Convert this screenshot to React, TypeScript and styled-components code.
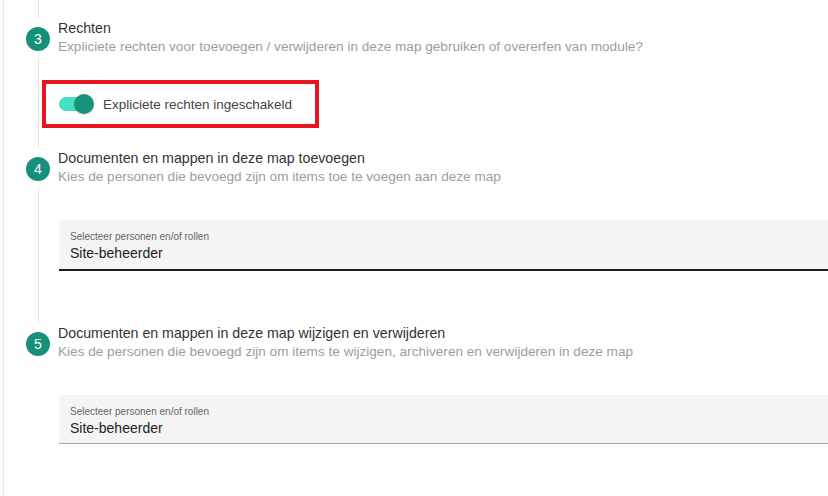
import React from "react";
import styled, { createGlobalStyle } from "styled-components";

const GlobalStyle = createGlobalStyle`
  html, body { margin: 0; padding: 0; background: #ffffff; }
  body { font-family: "Liberation Sans", Arial, sans-serif; color: #333; }
  * { box-sizing: border-box; }
`;

const Page = styled.div`
  margin-left: 3px;
  border-left: 1px solid #e6e6e6;
  min-height: 496px;
  padding-left: 22px;
  overflow: hidden;
`;

const Stepper = styled.div`
  display: flex;
  flex-direction: column;
`;

const Row = styled.div`
  display: grid;
  grid-template-columns: 24px 1fr;
  column-gap: 8px;
`;

const Rail = styled.div`
  display: flex;
  flex-direction: column;
  align-items: center;
`;

const Line = styled.div<{ $h?: number }>`
  width: 1px;
  background: #dedede;
  ${(p) => (p.$h ? `height: ${p.$h}px;` : "flex: 1; margin-top: 8px;")}
`;

const Circle = styled.div`
  margin-top: 9px;
  width: 24px;
  height: 24px;
  border-radius: 50%;
  background: #16907a;
  color: #fff;
  font-size: 14px;
  display: flex;
  align-items: center;
  justify-content: center;
  flex: none;
`;

const Content = styled.div<{ $pb: number }>`
  padding-bottom: ${(p) => p.$pb}px;
  min-width: 0;
`;

const Title = styled.div`
  font-size: 14.2px;
  line-height: 20px;
  color: #333;
  white-space: nowrap;
`;

const Subtitle = styled.div`
  font-size: 13.6px;
  line-height: 18px;
  color: #9d9d9d;
  white-space: nowrap;
`;

const Highlight = styled.div`
  margin-top: 24px;
  margin-left: -16px;
  width: 277px;
  height: 48px;
  border: 4px solid #e6141e;
  padding-left: 13px;
  display: flex;
  align-items: center;
  gap: 9px;
`;

const Toggle = styled.div`
  position: relative;
  width: 35px;
  height: 20px;
  flex: none;
`;

const Track = styled.div`
  position: absolute;
  left: 0;
  top: 3px;
  width: 31px;
  height: 14px;
  border-radius: 7px;
  background: #42e0c6;
`;

const Knob = styled.div`
  position: absolute;
  right: 0;
  top: 0;
  width: 20px;
  height: 20px;
  border-radius: 50%;
  background: #16917a;
  box-shadow: 0 1px 2px rgba(0, 0, 0, 0.15);
`;

const ToggleLabel = styled.span`
  font-size: 13.5px;
  color: #444;
  white-space: nowrap;
`;

const Field = styled.div<{ $focused?: boolean }>`
  margin-top: 34px;
  margin-left: 1px;
  margin-right: -40px;
  background: #f4f4f4;
  border-radius: 4px 4px 0 0;
  padding: 10px 11px 0;
  height: ${(p) => (p.$focused ? 51 : 49)}px;
  border-bottom: ${(p) => (p.$focused ? "2px solid #1c1c1c" : "1px solid #a8a8a8")};
`;

const FieldLabel = styled.div`
  font-size: 10px;
  line-height: 13px;
  color: #666;
  white-space: nowrap;
`;

const FieldValue = styled.div`
  margin-top: 1px;
  font-size: 14px;
  line-height: 18px;
  color: #222;
  white-space: nowrap;
`;

type StepProps = {
  n: number;
  title: string;
  subtitle: string;
  last?: boolean;
  pb: number;
  children?: React.ReactNode;
};

function Step({ n, title, subtitle, last, pb, children }: StepProps) {
  return (
    <Row>
      <Rail>
        <Circle>{n}</Circle>
        {!last && <Line />}
      </Rail>
      <Content $pb={pb}>
        <Title>{title}</Title>
        <Subtitle>{subtitle}</Subtitle>
        {children}
      </Content>
    </Row>
  );
}

export default function App() {
  return (
    <>
      <GlobalStyle />
      <Page>
        <Stepper>
          <Row>
            <Rail>
              <Line $h={18} />
            </Rail>
            <div />
          </Row>
          <Step
            n={3}
            title="Rechten"
            subtitle="Expliciete rechten voor toevoegen / verwijderen in deze map gebruiken of overerfen van module?"
            pb={20}
          >
            <Highlight>
              <Toggle>
                <Track />
                <Knob />
              </Toggle>
              <ToggleLabel>Expliciete rechten ingeschakeld</ToggleLabel>
            </Highlight>
          </Step>
          <Step
            n={4}
            title="Documenten en mappen in deze map toevoegen"
            subtitle="Kies de personen die bevoegd zijn om items toe te voegen aan deze map"
            pb={52}
          >
            <Field $focused>
              <FieldLabel>Selecteer personen en/of rollen</FieldLabel>
              <FieldValue>Site-beheerder</FieldValue>
            </Field>
          </Step>
          <Step
            n={5}
            title="Documenten en mappen in deze map wijzigen en verwijderen"
            subtitle="Kies de personen die bevoegd zijn om items te wijzigen, archiveren en verwijderen in deze map"
            pb={40}
            last
          >
            <Field>
              <FieldLabel>Selecteer personen en/of rollen</FieldLabel>
              <FieldValue>Site-beheerder</FieldValue>
            </Field>
          </Step>
        </Stepper>
      </Page>
    </>
  );
}
